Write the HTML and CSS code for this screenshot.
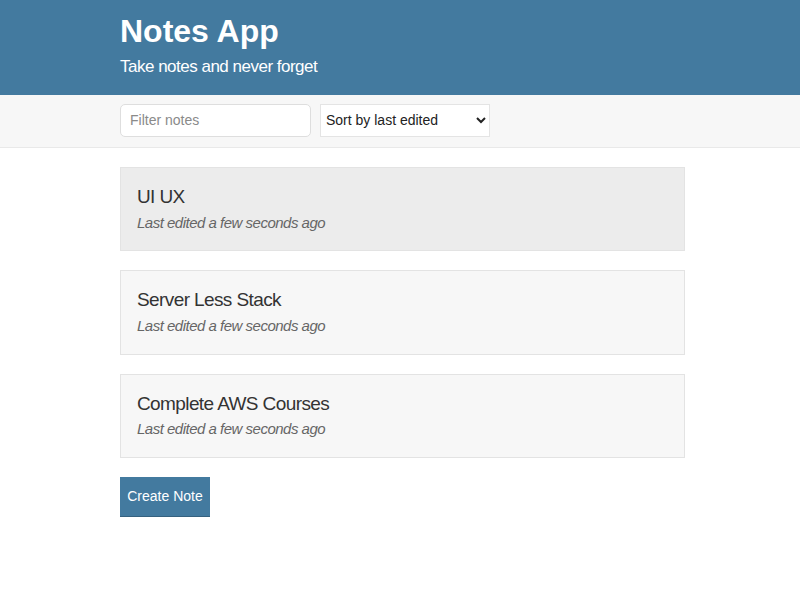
FILE: index.html
```html
<!DOCTYPE html>
<html>
<head>
<meta charset="utf-8">
<title>Notes App</title>
<link rel="stylesheet" href="styles.css">
</head>
<body>
<header class="header">
  <div class="container">
    <h1 class="header-title">Notes App</h1>
    <h2 class="header-subtitle">Take notes and never forget</h2>
  </div>
</header>
<div class="actions">
  <div class="container actions-row">
    <input class="input" type="text" placeholder="Filter notes">
    <select class="dropdown">
      <option>Sort by last edited</option>
      <option>Sort by recently created</option>
      <option>Sort alphabetically</option>
    </select>
  </div>
</div>
<main class="container notes">
  <a class="note note-active" href="#">
    <p class="note-title">UI UX</p>
    <p class="note-meta">Last edited a few seconds ago</p>
  </a>
  <a class="note" href="#">
    <p class="note-title">Server Less Stack</p>
    <p class="note-meta">Last edited a few seconds ago</p>
  </a>
  <a class="note" href="#">
    <p class="note-title">Complete AWS Courses</p>
    <p class="note-meta">Last edited a few seconds ago</p>
  </a>
  <div>
    <button class="button">Create Note</button>
  </div>
</main>
</body>
</html>
```

FILE: styles.css
```css
* {
  box-sizing: border-box;
}

body {
  margin: 0;
  font-family: "Liberation Sans", Arial, sans-serif;
  color: #333333;
  background: #ffffff;
}

.container {
  width: 565px;
  margin: 0 115px 0 120px;
}

.header {
  background: #437a9f;
  color: #ffffff;
  padding: 12px 0 17px;
}

.header-title {
  margin: 0;
  font-size: 32px;
  line-height: 1.2;
  font-weight: 700;
}

.header-subtitle {
  margin: 7px 0 0;
  font-size: 17px;
  line-height: 1.2;
  font-weight: 400;
  letter-spacing: -0.5px;
}

.actions {
  background: #f7f7f7;
  border-bottom: 1px solid #e9e9e9;
  padding: 9px 0 10px;
}

.actions-row {
  display: flex;
  gap: 9px;
}

.input {
  width: 191px;
  height: 33px;
  border: 1px solid #dedede;
  border-radius: 5px;
  background: #ffffff;
  padding: 0 9px;
  font-family: "Liberation Sans", Arial, sans-serif;
  font-size: 14px;
  color: #333333;
}

.input::placeholder {
  color: #8a8a8a;
}

.dropdown {
  width: 170px;
  height: 33px;
  border: 1px solid #e4e4e4;
  border-radius: 0;
  background: #ffffff;
  padding: 0 1px;
  font-family: "Liberation Sans", Arial, sans-serif;
  font-size: 14px;
  color: #222222;
}

.notes {
  display: flex;
  flex-direction: column;
  gap: 19px;
  padding-top: 19px;
}

.note {
  display: block;
  text-decoration: none;
  color: #333333;
  background: #f7f7f7;
  border: 1px solid #e3e3e3;
  padding: 18px 16px 18.6px;
}

.note-active {
  background: #ececec;
}

.note-title {
  margin: 0 0 5px;
  font-size: 19px;
  line-height: 1.2;
  letter-spacing: -0.6px;
}

.note-meta {
  margin: 0;
  font-size: 15px;
  line-height: 1.2;
  font-style: italic;
  color: #666666;
  letter-spacing: -0.5px;
}

.button {
  width: 90px;
  height: 40px;
  border: none;
  border-bottom: 1px solid #35617f;
  background: #437a9f;
  color: #ffffff;
  font-family: "Liberation Sans", Arial, sans-serif;
  font-size: 14px;
  padding: 0;
  cursor: pointer;
}
```
